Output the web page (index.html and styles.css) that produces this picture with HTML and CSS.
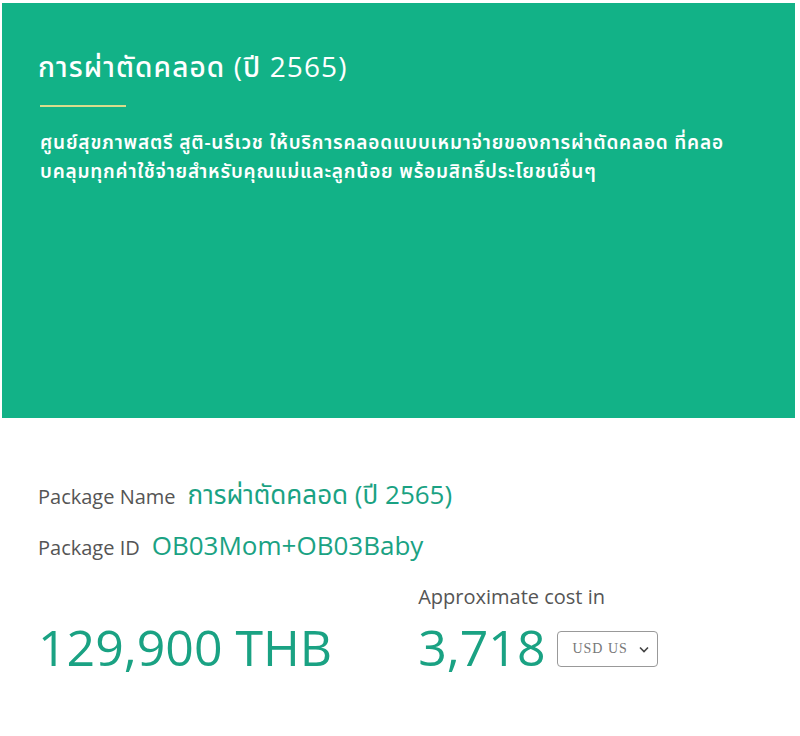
FILE: index.html
```html
<!DOCTYPE html>
<html lang="en">
<head>
  <meta charset="UTF-8" />
  <meta name="viewport" content="width=device-width, initial-scale=1.0" />
  <title>Package</title>
  <link rel="stylesheet" href="styles.css">
</head>
<body>

  <div class="hero">
    <h1 class="hero-title">การผ่าตัดคลอด (ปี 2565)</h1>
    <div class="hero-line"></div>
    <p class="hero-desc">ศูนย์สุขภาพสตรี สูติ-นรีเวช ให้บริการคลอดแบบเหมาจ่ายของการผ่าตัดคลอด ที่คลอ<br>บคลุมทุกค่าใช้จ่ายสำหรับคุณแม่และลูกน้อย พร้อมสิทธิ์ประโยชน์อื่นๆ</p>
  </div>

  <div class="details">
    <div class="row">
      <span class="label">Package Name</span>
      <span class="value">การผ่าตัดคลอด (ปี 2565)</span>
    </div>
    <div class="row">
      <span class="label">Package ID</span>
      <span class="value">OB03Mom+OB03Baby</span>
    </div>

    <div class="prices">
      <div class="price-main">129,900 THB</div>
      <div class="price-alt">
        <div class="approx">Approximate cost in</div>
        <div class="alt-row">
          <span class="price-num">3,718</span>
          <div class="currency">
            <span>USD US</span>
            <svg width="10" height="7" viewBox="0 0 10 7"><path d="M1 1.5l4 4 4-4" fill="none" stroke="#444" stroke-width="1.6"/></svg>
          </div>
        </div>
      </div>
    </div>
  </div>

</body>
</html>
```

FILE: styles.css
```css
* {
  box-sizing: border-box;
  font-family: "Open Sans", "Noto Sans Thai", "Noto Sans", sans-serif;
}
html, body {
  margin: 0;
  padding: 0;
  background: #fff;
}
.hero {
  margin: 3px 5px 0 2px;
  height: 415px;
  background: #12b287;
  color: #fff;
  padding: 44px 36px 0 36px;
}
.hero-title {
  margin: 0;
  font-size: 28px;
  font-weight: 500;
  line-height: 38px;
  letter-spacing: 1.1px;
}
.hero-line {
  width: 86px;
  height: 2px;
  background: #d9dc8c;
  margin: 20px 0 0 2px;
}
.hero-desc {
  margin: 21px 0 0 2px;
  font-size: 19px;
  font-weight: 600;
  line-height: 29px;
  letter-spacing: 0.8px;
  white-space: nowrap;
}
.details {
  padding: 58px 38px 0 38px;
}
.row {
  display: flex;
  align-items: baseline;
  gap: 12px;
  height: 51px;
}
.label {
  font-size: 20px;
  color: #555;
}
.value {
  font-size: 26px;
  color: #1aa283;
}
.prices {
  display: flex;
  align-items: flex-end;
  gap: 86px;
  margin-top: 5px;
}
.price-main {
  font-size: 50px;
  color: #1aa283;
  line-height: 66px;
}
.approx {
  font-size: 20px;
  color: #555;
  margin-bottom: 4px;
}
.alt-row {
  display: flex;
  align-items: center;
  gap: 12px;
}
.price-num {
  font-size: 50px;
  color: #1aa283;
  line-height: 66px;
}
.currency {
  width: 101px;
  height: 36px;
  margin-top: 4px;
  border: 1px solid #999;
  border-radius: 4px;
  display: flex;
  align-items: center;
  justify-content: space-between;
  padding: 0 8px 0 14px;
  font-size: 14px;
  color: #777;
  overflow: hidden;
  white-space: nowrap;
}
.currency span {
  font-family: "Liberation Serif", serif;
  overflow: hidden;
  width: 62px;
  letter-spacing: 1px;
}
```
